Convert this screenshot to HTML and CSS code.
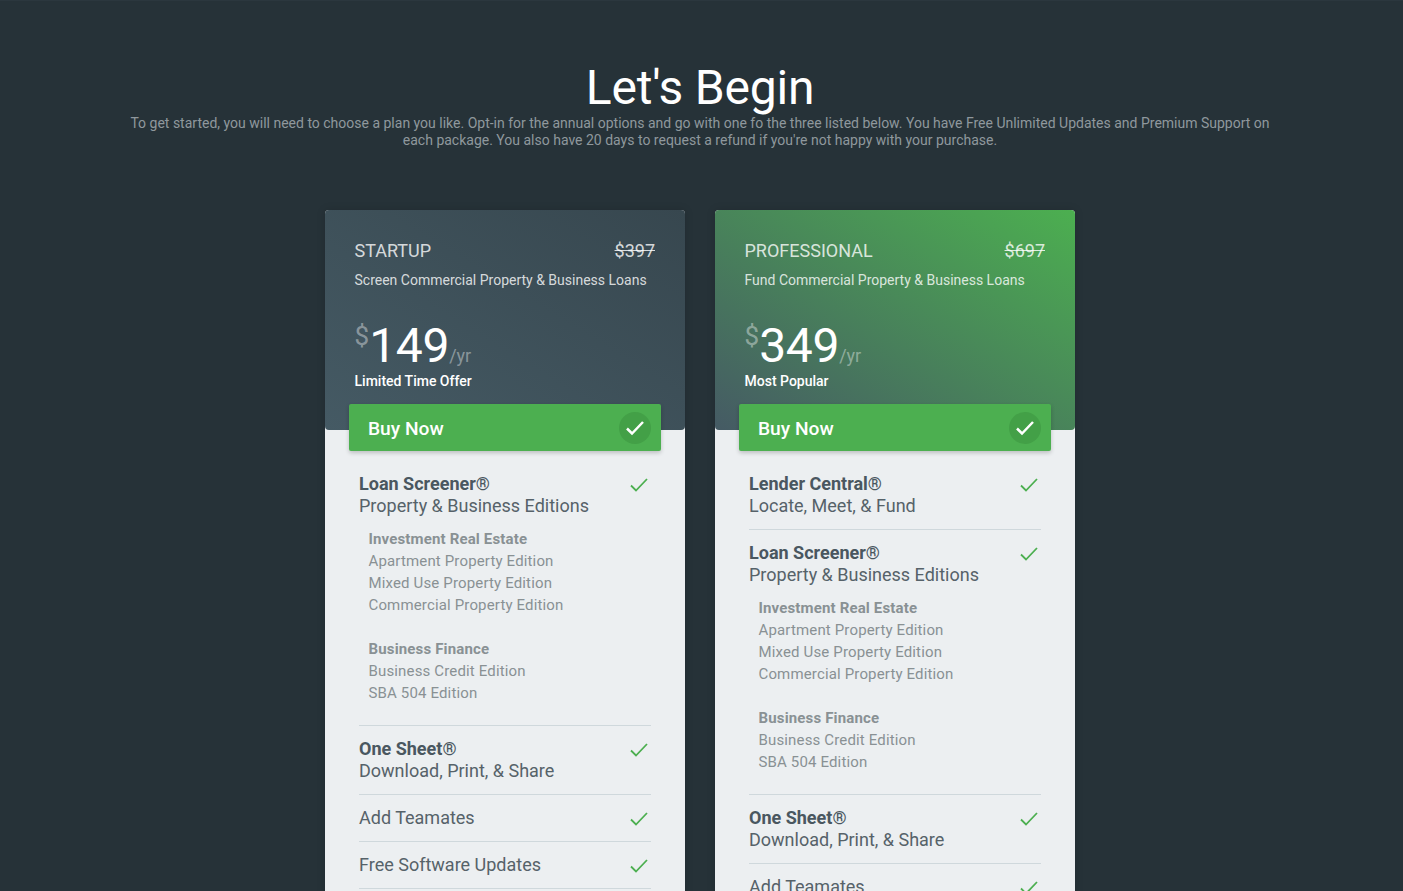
FILE: index.html
```html
<!DOCTYPE html>
<html lang="en">
<head>
    <meta charset="UTF-8">
    <meta name="viewport" content="width=device-width, initial-scale=1.0">
    <title>Let's Begin</title>
    <link rel="stylesheet" href="styles.css">
</head>
<body>

    <!-- Intro -->
    <div class="intro">
        <h1>Let's Begin</h1>
        <p>To get started, you will need to choose a plan you like. Opt-in for the annual options and go with one fo the three listed below. You have Free Unlimited Updates and Premium Support on each package. You also have 20 days to request a refund if you're not happy with your purchase.</p>
    </div>

    <!-- Plans -->
    <div class="plans">

        <div class="plan">
            <div class="plan-head startup">
                <div class="plan-title"><span>STARTUP</span><s>$397</s></div>
                <p class="plan-desc">Screen Commercial Property &amp; Business Loans</p>
                <div class="price"><sup>$</sup><span class="amount">149</span><span class="period">/yr</span></div>
                <p class="plan-note">Limited Time Offer</p>
            </div>
            <a href="#" class="buy">
                <span class="buy-label">Buy Now</span>
                <span class="buy-check"><svg width="20" height="20" viewBox="0 0 20 20"><path d="M2 10.5l5 5L18 4" fill="none" stroke="#fff" stroke-width="2.5"/></svg></span>
            </a>
            <ul class="features">
                <li>
                    <div class="feature-row">
                        <div><strong>Loan Screener®</strong><br>Property &amp; Business Editions</div>
                        <svg class="check" width="18" height="14" viewBox="0 0 18 14"><path d="M1 7.5l5 5L17 1" fill="none" stroke="#4caf50" stroke-width="1.8"/></svg>
                    </div>
                    <div class="editions">
                        <p><b>Investment Real Estate</b><br>Apartment Property Edition<br>Mixed Use Property Edition<br>Commercial Property Edition</p>
                        <p><b>Business Finance</b><br>Business Credit Edition<br>SBA 504 Edition</p>
                    </div>
                </li>
                <li>
                    <div class="feature-row">
                        <div><strong>One Sheet®</strong><br>Download, Print, &amp; Share</div>
                        <svg class="check" width="18" height="14" viewBox="0 0 18 14"><path d="M1 7.5l5 5L17 1" fill="none" stroke="#4caf50" stroke-width="1.8"/></svg>
                    </div>
                </li>
                <li>
                    <div class="feature-row">
                        <div>Add Teamates</div>
                        <svg class="check" width="18" height="14" viewBox="0 0 18 14"><path d="M1 7.5l5 5L17 1" fill="none" stroke="#4caf50" stroke-width="1.8"/></svg>
                    </div>
                </li>
                <li>
                    <div class="feature-row">
                        <div>Free Software Updates</div>
                        <svg class="check" width="18" height="14" viewBox="0 0 18 14"><path d="M1 7.5l5 5L17 1" fill="none" stroke="#4caf50" stroke-width="1.8"/></svg>
                    </div>
                </li>
            </ul>
        </div>

        <div class="plan">
            <div class="plan-head professional">
                <div class="plan-title"><span>PROFESSIONAL</span><s>$697</s></div>
                <p class="plan-desc">Fund Commercial Property &amp; Business Loans</p>
                <div class="price"><sup>$</sup><span class="amount">349</span><span class="period">/yr</span></div>
                <p class="plan-note">Most Popular</p>
            </div>
            <a href="#" class="buy">
                <span class="buy-label">Buy Now</span>
                <span class="buy-check"><svg width="20" height="20" viewBox="0 0 20 20"><path d="M2 10.5l5 5L18 4" fill="none" stroke="#fff" stroke-width="2.5"/></svg></span>
            </a>
            <ul class="features">
                <li>
                    <div class="feature-row">
                        <div><strong>Lender Central®</strong><br>Locate, Meet, &amp; Fund</div>
                        <svg class="check" width="18" height="14" viewBox="0 0 18 14"><path d="M1 7.5l5 5L17 1" fill="none" stroke="#4caf50" stroke-width="1.8"/></svg>
                    </div>
                </li>
                <li>
                    <div class="feature-row">
                        <div><strong>Loan Screener®</strong><br>Property &amp; Business Editions</div>
                        <svg class="check" width="18" height="14" viewBox="0 0 18 14"><path d="M1 7.5l5 5L17 1" fill="none" stroke="#4caf50" stroke-width="1.8"/></svg>
                    </div>
                    <div class="editions">
                        <p><b>Investment Real Estate</b><br>Apartment Property Edition<br>Mixed Use Property Edition<br>Commercial Property Edition</p>
                        <p><b>Business Finance</b><br>Business Credit Edition<br>SBA 504 Edition</p>
                    </div>
                </li>
                <li>
                    <div class="feature-row">
                        <div><strong>One Sheet®</strong><br>Download, Print, &amp; Share</div>
                        <svg class="check" width="18" height="14" viewBox="0 0 18 14"><path d="M1 7.5l5 5L17 1" fill="none" stroke="#4caf50" stroke-width="1.8"/></svg>
                    </div>
                </li>
                <li>
                    <div class="feature-row">
                        <div>Add Teamates</div>
                        <svg class="check" width="18" height="14" viewBox="0 0 18 14"><path d="M1 7.5l5 5L17 1" fill="none" stroke="#4caf50" stroke-width="1.8"/></svg>
                    </div>
                </li>
            </ul>
        </div>

    </div>

</body>
</html>
```

FILE: styles.css
```css
/* General Styles */
html, body {
    height: 100%;
    overflow: hidden;
}

body {
    font-family: 'Roboto', sans-serif;
    margin: 0;
    padding: 0 3px 0 0;
    box-sizing: border-box;
    border-top: 1px solid #2b373e;
    background: #263238;
    color: white;
}

/* Intro */
.intro {
    padding-top: 60px;
    text-align: center;
}

.intro h1 {
    margin: 0;
    font-size: 48px;
    font-weight: 400;
    letter-spacing: -0.2px;
    line-height: 54px;
}

.intro p {
    width: 1150px;
    margin: 0 auto;
    font-size: 14px;
    line-height: 17px;
    color: #8f989d;
}

/* Plans */
.plans {
    display: flex;
    justify-content: center;
    gap: 30px;
    margin-top: 61px;
}

.plan {
    width: 360px;
    background: #eceff1;
    border-radius: 4px 4px 0 0;
    box-shadow: 0 0 8px rgba(0, 0, 0, 0.15);
}

.plan-head {
    height: 220px;
    box-sizing: border-box;
    padding: 30px 30px 0 29.5px;
    border-radius: 4px;
}

.startup {
    background: linear-gradient(to top right, #455a64, #37474f);
}

.professional {
    background: linear-gradient(to top right, #455a64, #4caf50);
}

.plan-title {
    display: flex;
    justify-content: space-between;
    font-size: 18px;
    line-height: 22px;
    color: rgba(255, 255, 255, 0.8);
}

.plan-desc {
    margin: 8px 0 0;
    font-size: 14px;
    line-height: 20px;
    color: rgba(255, 255, 255, 0.8);
}

.price {
    display: flex;
    align-items: flex-start;
    margin-top: 27px;
    height: 54px;
}

.price sup {
    margin-top: 4px;
    font-size: 26px;
    line-height: 30px;
    color: rgba(255, 255, 255, 0.4);
}

.amount {
    font-size: 48px;
    font-weight: 400;
    letter-spacing: -0.3px;
    line-height: 58px;
}

.period {
    margin-top: 28px;
    font-size: 18px;
    line-height: 22px;
    color: rgba(255, 255, 255, 0.4);
}

.plan-note {
    margin: 0;
    font-size: 14px;
    font-weight: 500;
    line-height: 20px;
}

/* Buy button */
.buy {
    display: flex;
    justify-content: space-between;
    align-items: center;
    height: 47px;
    box-sizing: border-box;
    margin: -26px 24px 0;
    padding: 0 10px 0 19px;
    background: #4caf50;
    border-radius: 2px;
    box-shadow: 0 2px 4px rgba(0, 0, 0, 0.2);
    color: white;
    font-size: 19.2px;
    font-weight: 500;
    text-decoration: none;
}

.buy-label {
    padding-top: 2px;
}

.buy-check {
    display: flex;
    justify-content: center;
    align-items: center;
    width: 32px;
    height: 32px;
    border-radius: 50%;
    background: #43a047;
}

/* Feature list */
.features {
    list-style: none;
    margin: 10px 34px 0;
    padding: 0;
    font-size: 18px;
    line-height: 22px;
    color: #566269;
}

.features li {
    padding: 12px 0;
    border-bottom: 1px solid #cfd8dc;
}

.features strong {
    font-weight: 700;
    color: #4a5760;
}

.feature-row {
    display: flex;
    justify-content: space-between;
    align-items: flex-start;
}

.check {
    margin: 5px 3px 0 0;
}

.editions {
    margin: 11px 0 9px 9.5px;
    font-size: 15px;
    letter-spacing: 0.15px;
    color: #899194;
}

.editions p {
    margin: 0;
}

.editions p + p {
    margin-top: 22px;
}

.editions b {
    font-weight: 700;
}
```
